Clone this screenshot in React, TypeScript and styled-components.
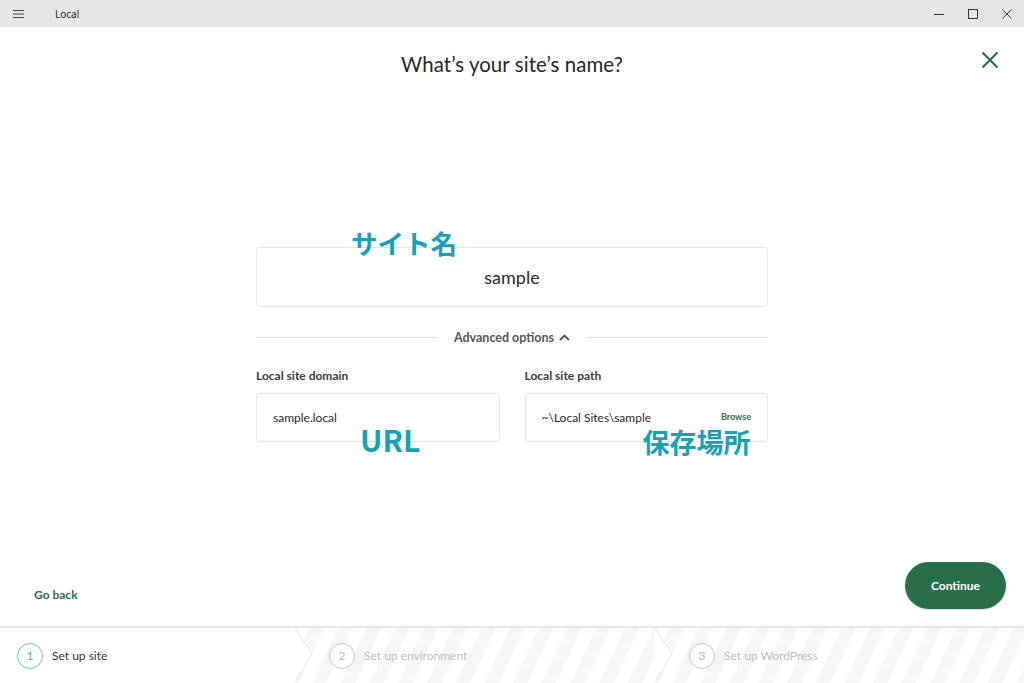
import * as React from 'react';
import styled, { createGlobalStyle } from 'styled-components';

const green = '#276f49';
const teal = '#16a2b5';

const GlobalStyle = createGlobalStyle`
  html, body {
    margin: 0;
    padding: 0;
    height: 100%;
    background: #ffffff;
  }
  body {
    font-family: Lato, "Noto Sans", sans-serif;
    color: #333;
    overflow: hidden;
  }
  #root {
    height: 100%;
  }
`;

const Window = styled.div`
  display: flex;
  flex-direction: column;
  width: 1024px;
  height: 683px;
`;

const TitleBar = styled.div`
  display: flex;
  align-items: center;
  height: 27px;
  background: #e6e6e6;
  flex-shrink: 0;
`;

const MenuButton = styled.div`
  width: 36px;
  display: flex;
  justify-content: center;
  color: #444;
`;

const AppName = styled.span`
  margin-left: 19px;
  font-family: "Noto Sans", "Liberation Sans", sans-serif;
  font-size: 10px;
  color: #222;
  flex: 1;
`;

const WinControls = styled.div`
  display: flex;
  height: 100%;
`;

const WinButton = styled.div`
  width: 34px;
  display: flex;
  align-items: center;
  justify-content: center;
  color: #333;
`;

const Main = styled.main`
  flex: 1;
  display: flex;
  flex-direction: column;
  position: relative;
`;

const Header = styled.header`
  height: 80px;
  display: flex;
  align-items: flex-start;
  justify-content: center;
  padding-top: 25px;
  box-sizing: border-box;
`;

const Title = styled.h1`
  margin: 0;
  font-size: 20.4px;
  font-weight: 400;
  color: #262626;
  letter-spacing: 0.1px;
`;

const CloseButton = styled.button`
  position: absolute;
  top: 24px;
  right: 25px;
  border: 0;
  background: none;
  padding: 0;
  color: ${green};
  cursor: pointer;
  line-height: 0;
`;

const Form = styled.div`
  width: 512px;
  margin: 140px auto 0;
  display: flex;
  flex-direction: column;
`;

const Field = styled.div<{ $h: number }>`
  position: relative;
  height: ${({ $h }) => $h}px;
  box-sizing: border-box;
  border: 1px solid #e6e6e6;
  border-radius: 4px;
  display: flex;
  align-items: center;
  padding: 0 16px;
`;

const NameValue = styled.span`
  flex: 1;
  text-align: center;
  font-size: 18px;
  color: #2a2a2a;
`;

const Note = styled.span<{ $left: number; $top: number; $size: number }>`
  position: absolute;
  left: ${({ $left }) => $left}px;
  top: ${({ $top }) => $top}px;
  font-family: "Noto Sans CJK JP", "Noto Sans", sans-serif;
  font-weight: 700;
  font-size: ${({ $size }) => $size}px;
  line-height: 1;
  color: ${teal};
  white-space: nowrap;
`;

const Divider = styled.div`
  margin-top: 22px;
  display: flex;
  align-items: center;
  gap: 16px;
  height: 16px;
  &::before,
  &::after {
    content: '';
    flex: 1;
    height: 1px;
    background: #e3e3e3;
  }
`;

const AdvancedLabel = styled.span`
  font-size: 12.5px;
  font-weight: 700;
  color: #555;
  display: flex;
  align-items: center;
  gap: 5px;
`;

const Columns = styled.div`
  margin-top: 24px;
  display: grid;
  grid-template-columns: 1fr 1fr;
  column-gap: 25px;
`;

const Column = styled.div`
  display: flex;
  flex-direction: column;
`;

const Label = styled.label`
  font-size: 12px;
  font-weight: 700;
  color: #3a3a3a;
  line-height: 14px;
  margin-bottom: 10px;
`;

const Value = styled.span`
  flex: 1;
  font-size: 12px;
  color: #2a2a2a;
`;

const Browse = styled.span`
  font-size: 9px;
  font-weight: 700;
  color: ${green};
  margin-top: -2px;
`;

const Spacer = styled.div`
  flex: 1;
`;

const Actions = styled.div`
  display: flex;
  align-items: center;
  justify-content: space-between;
  padding: 0 18px 17px 34px;
`;

const GoBack = styled.button`
  border: 0;
  background: none;
  padding: 0;
  margin-top: 17px;
  font-family: Lato, sans-serif;
  font-size: 12px;
  font-weight: 700;
  color: ${green};
`;

const Continue = styled.button`
  width: 101px;
  height: 47px;
  border: 0;
  border-radius: 24px;
  background: ${green};
  color: #fff;
  font-family: Lato, sans-serif;
  font-size: 12px;
  font-weight: 700;
  box-shadow: 0 1px 2px rgba(0, 0, 0, 0.15);
`;

const Stepper = styled.footer`
  display: flex;
  height: 55px;
  border-top: 2px solid #e8e8e8;
  flex-shrink: 0;
`;

const Step = styled.div<{ $w: number; $active?: boolean }>`
  position: relative;
  width: ${({ $w }) => $w}px;
  display: flex;
  align-items: center;
  gap: 9px;
  padding-left: ${({ $active }) => ($active ? 17 : 34)}px;
  box-sizing: border-box;
  background: ${({ $active }) =>
    $active
      ? '#fff'
      : 'repeating-linear-gradient(115deg, #ffffff 0 13px, #f6f6f6 13px 26px)'};
`;

const Chevron = styled.svg`
  position: absolute;
  left: 0;
  top: 0;
`;

const StepCircle = styled.span<{ $active?: boolean }>`
  position: relative;
  width: 26px;
  height: 26px;
  box-sizing: border-box;
  border-radius: 50%;
  border: 1.5px solid ${({ $active }) => ($active ? '#5fcd8b' : '#c9c9c9')};
  display: flex;
  align-items: center;
  justify-content: center;
  font-size: 12px;
  color: ${({ $active }) => ($active ? '#4cbf78' : '#bbb')};
  background: #fff;
`;

const StepLabel = styled.span<{ $active?: boolean }>`
  position: relative;
  font-size: 12px;
  color: ${({ $active }) => ($active ? '#333' : '#bdbdbd')};
`;

const steps = [
  { n: 1, label: 'Set up site', w: 295 },
  { n: 2, label: 'Set up environment', w: 360 },
  { n: 3, label: 'Set up WordPress', w: 369 },
];

export default function App() {
  return (
    <>
      <GlobalStyle />
      <Window>
        <TitleBar>
          <MenuButton>
            <svg width="11" height="8" viewBox="0 0 11 8">
              <path d="M0 0.5h11M0 4h11M0 7.5h11" stroke="currentColor" strokeWidth="1" />
            </svg>
          </MenuButton>
          <AppName>Local</AppName>
          <WinControls>
            <WinButton>
              <svg width="10" height="10" viewBox="0 0 10 10">
                <path d="M0 5.5h10" stroke="currentColor" strokeWidth="1" />
              </svg>
            </WinButton>
            <WinButton>
              <svg width="10" height="10" viewBox="0 0 10 10">
                <rect x="0.5" y="0.5" width="9" height="9" fill="none" stroke="currentColor" strokeWidth="1" />
              </svg>
            </WinButton>
            <WinButton>
              <svg width="10" height="10" viewBox="0 0 10 10">
                <path d="M0.5 0.5l9 9M9.5 0.5l-9 9" stroke="currentColor" strokeWidth="1" />
              </svg>
            </WinButton>
          </WinControls>
        </TitleBar>

        <Main>
          <Header>
            <Title>What’s your site’s name?</Title>
          </Header>
          <CloseButton aria-label="Close">
            <svg width="18" height="18" viewBox="0 0 18 18">
              <path d="M1.5 1.5l15 15M16.5 1.5l-15 15" stroke="currentColor" strokeWidth="2" />
            </svg>
          </CloseButton>

          <Form>
            <Field $h={60}>
              <NameValue>sample</NameValue>
              <Note $left={94} $top={-18} $size={26.5}>サイト名</Note>
            </Field>

            <Divider>
              <AdvancedLabel>
                Advanced options
                <svg width="11" height="7" viewBox="0 0 11 7">
                  <path d="M1 6l4.5-4.5L10 6" fill="none" stroke="#555" strokeWidth="1.8" />
                </svg>
              </AdvancedLabel>
            </Divider>

            <Columns>
              <Column>
                <Label>Local site domain</Label>
                <Field $h={49}>
                  <Value>sample.local</Value>
                  <Note $left={103} $top={30} $size={30}>URL</Note>
                </Field>
              </Column>
              <Column>
                <Label>Local site path</Label>
                <Field $h={49}>
                  <Value>~\Local Sites\sample</Value>
                  <Browse>Browse</Browse>
                  <Note $left={117} $top={34} $size={27}>保存場所</Note>
                </Field>
              </Column>
            </Columns>
          </Form>

          <Spacer />

          <Actions>
            <GoBack>Go back</GoBack>
            <Continue>Continue</Continue>
          </Actions>
        </Main>

        <Stepper>
          {steps.map((s, i) => (
            <Step key={s.n} $w={s.w} $active={i === 0}>
              {i > 0 && (
                <Chevron width="20" height="53" viewBox="0 0 20 53">
                  <path d="M0 0L17 26.5L0 53Z" fill="#fff" />
                  <path d="M0 0L17 26.5L0 53" fill="none" stroke="#e6e6e6" strokeWidth="1" />
                </Chevron>
              )}
              <StepCircle $active={i === 0}>{s.n}</StepCircle>
              <StepLabel $active={i === 0}>{s.label}</StepLabel>
            </Step>
          ))}
        </Stepper>
      </Window>
    </>
  );
}
